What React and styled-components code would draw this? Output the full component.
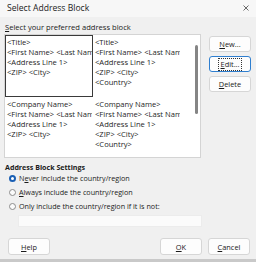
import React from "react";
import styled, { createGlobalStyle } from "styled-components";

const Global = createGlobalStyle`
  html, body { margin: 0; padding: 0; background: #f0f0f0; }
  body { font-family: "Open Sans", "Noto Sans", sans-serif; color: #1b1b1b; }
  * { box-sizing: border-box; }
`;

const Dialog = styled.div`
  width: 256px;
  height: 262px;
  display: flex;
  flex-direction: column;
  background: #f0f0f0;
  border-bottom: 3px solid #c9c9c9;
  overflow: hidden;
`;

const TitleBar = styled.div`
  height: 17px;
  display: flex;
  align-items: center;
  justify-content: space-between;
  padding: 0 7px 1px 7px;
  background: #f7f7f7;
  font-size: 8.6px;
`;

const Close = styled.svg`
  width: 6px;
  height: 6px;
`;

const Body = styled.div`
  flex: 1;
  display: flex;
  flex-direction: column;
  padding: 5px 4px 0 5px;
`;

const Label = styled.div`
  font-size: 7.6px;
  line-height: 10px;
  height: 10px;
  margin-bottom: 2px;
`;

const U = styled.span`
  text-decoration: underline;
  text-underline-offset: 1px;
`;

const TopRow = styled.div`
  display: flex;
  align-items: flex-start;
`;

const ListBox = styled.div`
  width: 197px;
  height: 124px;
  margin-left: -1px;
  background: #ffffff;
  border: 1px solid #d4d4d4;
  display: flex;
  overflow: hidden;
`;

const Grid = styled.div`
  width: 188px;
  display: grid;
  grid-template-columns: 88px 88px;
  grid-auto-rows: 62px;
  align-content: start;
`;

const Cell = styled.div`
  border: 1px solid ${(p) => (p.$selected ? "#3a3a3a" : "transparent")};
  padding: 1px 0 0 1px;
  overflow: hidden;
  white-space: nowrap;
  font-size: 7.6px;
  line-height: 10px;
  color: #1e1e1e;
`;

const Track = styled.div`
  width: 8px;
  display: flex;
  justify-content: center;
`;

const Thumb = styled.div`
  width: 3px;
  height: 69px;
  margin-top: 10px;
  background: #858585;
  border-radius: 1.5px;
`;

const Buttons = styled.div`
  display: flex;
  flex-direction: column;
  gap: 4px;
  margin-left: 8px;
  padding-top: 2px;
`;

const Btn = styled.div`
  width: 42px;
  height: 16px;
  display: flex;
  align-items: center;
  justify-content: center;
  background: #fdfdfd;
  border: 1px solid ${(p) => (p.$default ? "#2f7fd0" : "#d6d6d6")};
  border-radius: 3px;
  font-size: 7.4px;
  color: #1b1b1b;
`;

const Focus = styled.span`
  outline: 1px dotted #333;
  outline-offset: 1px;
  padding: 0 1px;
  line-height: 9px;
`;

const Heading = styled.div`
  margin-top: 4px;
  font-size: 7.1px;
  font-weight: 700;
  line-height: 10px;
`;

const Radios = styled.div`
  display: flex;
  flex-direction: column;
  gap: 4px;
  margin-top: 1px;
  padding-left: 4px;
`;

const RadioRow = styled.div`
  display: flex;
  align-items: center;
  gap: 3px;
  height: 10px;
  font-size: 7.2px;
`;

const Dot = styled.span`
  width: 7px;
  height: 7px;
  border-radius: 50%;
  flex: none;
  background: ${(p) => (p.$on ? "#ffffff" : "#fbfbfb")};
  border: ${(p) => (p.$on ? "2px solid #1a5fb4" : "1px solid #8c8c8c")};
`;

const Input = styled.div`
  margin: 4px 0 0 13px;
  width: 184px;
  height: 12px;
  background: #fbfbfb;
  border: 1px solid #ececec;
`;

const Footer = styled.div`
  margin-top: auto;
  display: flex;
  align-items: center;
  padding: 0 2px 4px 3px;
`;

const Spacer = styled.div`
  flex: 1;
`;

const FootBtn = styled(Btn)`
  height: 17px;
  & + & { margin-left: 6px; }
`;

const blocks = [
  ["<Title>", "<First Name>  <Last Name>", "<Address Line 1>", "<ZIP>  <City>"],
  ["<Title>", "<First Name>  <Last Name>", "<Address Line 1>", "<ZIP>  <City>", "<Country>"],
  ["<Company Name>", "<First Name>  <Last Name>", "<Address Line 1>", "<ZIP>  <City>"],
  ["<Company Name>", "<First Name>  <Last Name>", "<Address Line 1>", "<ZIP>  <City>", "<Country>"],
];

export default function App() {
  return (
    <>
      <Global />
      <Dialog>
        <TitleBar>
          <span>Select Address Block</span>
          <Close viewBox="0 0 6 6">
            <path d="M0.5 0.5 L5.5 5.5 M5.5 0.5 L0.5 5.5" stroke="#444" strokeWidth="0.8" />
          </Close>
        </TitleBar>
        <Body>
          <Label>
            <U>S</U>elect your preferred address block
          </Label>
          <TopRow>
            <ListBox>
              <Grid>
                {blocks.map((lines, i) => (
                  <Cell key={i} $selected={i === 0}>
                    {lines.map((l, j) => (
                      <div key={j}>{l}</div>
                    ))}
                  </Cell>
                ))}
              </Grid>
              <Track>
                <Thumb />
              </Track>
            </ListBox>
            <Buttons>
              <Btn><span><U>N</U>ew...</span></Btn>
              <Btn $default><Focus><U>E</U>dit...</Focus></Btn>
              <Btn><span><U>D</U>elete</span></Btn>
            </Buttons>
          </TopRow>
          <Heading>Address Block Settings</Heading>
          <Radios>
            <RadioRow><Dot $on /><span>N<U>e</U>ver include the country/region</span></RadioRow>
            <RadioRow><Dot /><span><U>A</U>lways include the country/region</span></RadioRow>
            <RadioRow><Dot /><span>Only include the country/region if it is not:</span></RadioRow>
          </Radios>
          <Input />
          <Footer>
            <FootBtn><span><U>H</U>elp</span></FootBtn>
            <Spacer />
            <FootBtn><span><U>O</U>K</span></FootBtn>
            <FootBtn><span><U>C</U>ancel</span></FootBtn>
          </Footer>
        </Body>
      </Dialog>
    </>
  );
}
